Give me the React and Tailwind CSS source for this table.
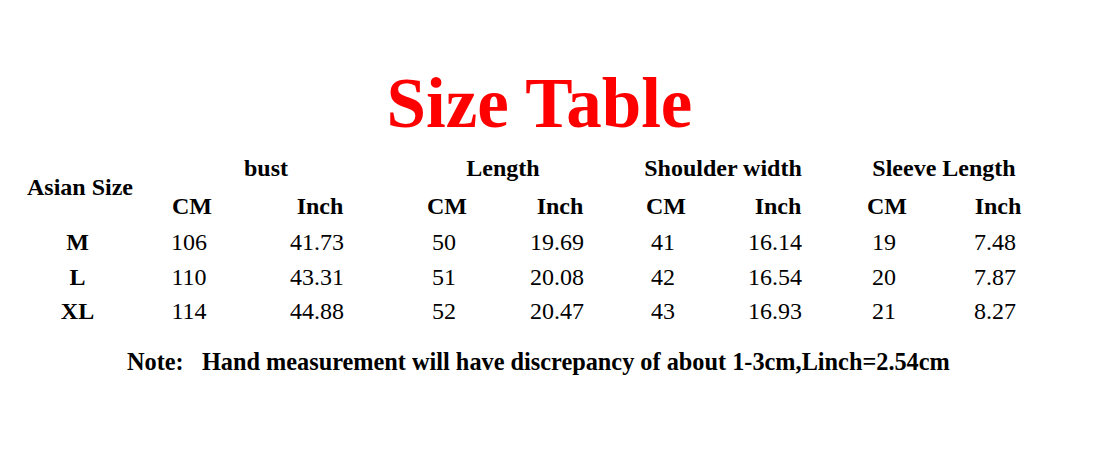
import React from 'react';

const groups = [
    { name: 'bust', w: 'w-[252px]' },
    { name: 'Length', w: 'w-[222px]' },
    { name: 'Shoulder width', w: 'w-[218px]' },
    { name: 'Sleeve Length', w: 'w-[224px]' },
];

// widths of the value columns so that each cell lines up with the picture
const cols = ['w-[104px]', 'w-[152px]', 'w-[102px]', 'w-[124px]', 'w-[88px]', 'w-[136px]', 'w-[82px]', 'w-[140px]'];

const rows = [
    { size: 'M', values: ['106', '41.73', '50', '19.69', '41', '16.14', '19', '7.48'] },
    { size: 'L', values: ['110', '43.31', '51', '20.08', '42', '16.54', '20', '7.87'] },
    { size: 'XL', values: ['114', '44.88', '52', '20.47', '43', '16.93', '21', '8.27'] },
];

export default function App() {
    return (
        <div className="w-[1099px] h-[453px] bg-white text-black overflow-hidden" style={{ fontFamily: '"Liberation Serif", "Times New Roman", serif' }}>
            {/* title */}
            <div className="pt-[63px] h-[143px] text-center text-[71px] leading-[80px] font-bold text-[#ff0000] pr-[20px]">
                Size Table
            </div>

            {/* header */}
            <div className="mt-[6px] flex pl-[20px] text-[24px] font-bold">
                <div className="w-[120px] h-[76px] flex items-center justify-center leading-[38px]">Asian Size</div>
                <div className="flex flex-col">
                    <div className="flex h-[38px] leading-[38px]">
                        {groups.map(g => (
                            <div key={g.name} className={`${g.w} text-center whitespace-nowrap`}>{g.name}</div>
                        ))}
                    </div>
                    <div className="flex h-[38px] leading-[38px]">
                        {cols.map((w, i) => (
                            <div key={i} className={`${w} text-center`}>{i % 2 === 0 ? 'CM' : 'Inch'}</div>
                        ))}
                    </div>
                </div>
            </div>

            {/* data rows */}
            <div className="pl-[20px] text-[24px]">
                {rows.map(r => (
                    <div key={r.size} className="flex h-[34.5px] leading-[34.5px]">
                        <div className="w-[120px] text-center font-bold pr-[5px]">{r.size}</div>
                        {r.values.map((v, i) => (
                            <div key={i} className={`${cols[i]} text-center pr-[6px]`}>{v}</div>
                        ))}
                    </div>
                ))}
            </div>

            {/* note */}
            <div className="mt-[16.5px] pl-[127px] text-[24.3px] leading-[34px] font-bold whitespace-pre">
                {'Note:   Hand measurement will have discrepancy of about 1-3cm,Linch=2.54cm'}
            </div>
        </div>
    );
}
